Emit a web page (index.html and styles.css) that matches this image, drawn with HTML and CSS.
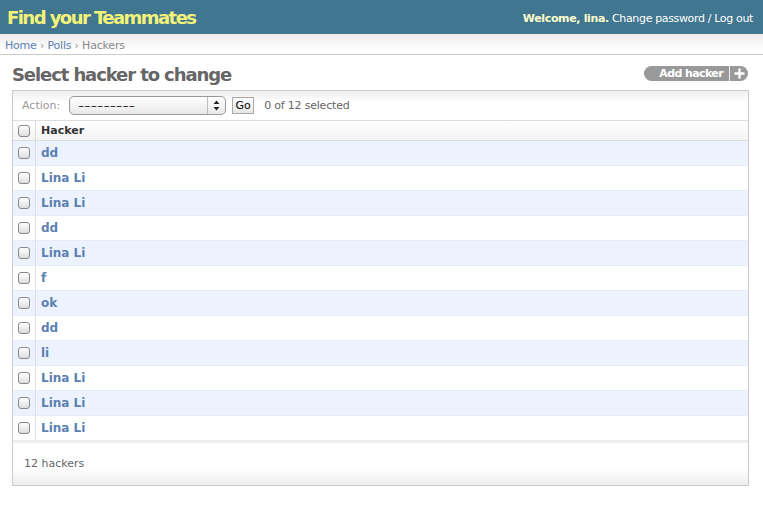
FILE: index.html
```html
<!DOCTYPE html>
<html>
<head>
<meta charset="utf-8">
<title>Select hacker to change</title>
<link rel="stylesheet" href="styles.css">
</head>
<body>
<div class="header">
  <div class="branding">Find your Teammates</div>
  <div class="user-tools"><span class="welcome">Welcome, lina.</span> <a href="#">Change password</a> / <a href="#">Log out</a></div>
</div>
<div class="breadcrumbs"><a href="#">Home</a> <span class="sep">›</span> <a href="#">Polls</a> <span class="sep">›</span> <span class="current">Hackers</span></div>
<div class="content">
  <div class="title-row">
    <h1>Select hacker to change</h1>
    <a class="addlink" href="#"><span class="addlabel">Add hacker</span><span class="addicon"><svg width="13" height="13" viewBox="0 0 13 13"><path d="M6.5 1.5v10M1.5 6.5h10" stroke="#fff" stroke-width="2.4"/></svg></span></a>
  </div>
  <div class="changelist">
    <div class="actions">
      <label class="action-label">Action:</label>
      <div class="select"><span class="select-text">---------</span><span class="select-arrows"><svg width="7" height="11" viewBox="0 0 7 11"><path d="M3.5 0.5L6.5 4H0.5Z M3.5 10.5L6.5 7H0.5Z" fill="#222"/></svg></span></div>
      <button class="go">Go</button>
      <span class="counter">0 of 12 selected</span>
    </div>
    <div class="table">
      <div class="row head"><div class="cb-cell"><input type="checkbox"></div><div class="name-cell">Hacker</div></div>
      <div class="row odd"><div class="cb-cell"><input type="checkbox"></div><div class="name-cell"><a href="#">dd</a></div></div>
      <div class="row"><div class="cb-cell"><input type="checkbox"></div><div class="name-cell"><a href="#">Lina Li</a></div></div>
      <div class="row odd"><div class="cb-cell"><input type="checkbox"></div><div class="name-cell"><a href="#">Lina Li</a></div></div>
      <div class="row"><div class="cb-cell"><input type="checkbox"></div><div class="name-cell"><a href="#">dd</a></div></div>
      <div class="row odd"><div class="cb-cell"><input type="checkbox"></div><div class="name-cell"><a href="#">Lina Li</a></div></div>
      <div class="row"><div class="cb-cell"><input type="checkbox"></div><div class="name-cell"><a href="#">f</a></div></div>
      <div class="row odd"><div class="cb-cell"><input type="checkbox"></div><div class="name-cell"><a href="#">ok</a></div></div>
      <div class="row"><div class="cb-cell"><input type="checkbox"></div><div class="name-cell"><a href="#">dd</a></div></div>
      <div class="row odd"><div class="cb-cell"><input type="checkbox"></div><div class="name-cell"><a href="#">li</a></div></div>
      <div class="row"><div class="cb-cell"><input type="checkbox"></div><div class="name-cell"><a href="#">Lina Li</a></div></div>
      <div class="row odd"><div class="cb-cell"><input type="checkbox"></div><div class="name-cell"><a href="#">Lina Li</a></div></div>
      <div class="row last"><div class="cb-cell"><input type="checkbox"></div><div class="name-cell"><a href="#">Lina Li</a></div></div>
    </div>
    <div class="paginator">12 hackers</div>
  </div>
</div>
</body>
</html>
```
FILE: styles.css
```css
* { box-sizing: border-box; }
body {
  margin: 0;
  font-family: "DejaVu Sans", "Liberation Sans", sans-serif;
  font-size: 12px;
  color: #333;
  background: #fff;
}
a { text-decoration: none; color: #5b80b2; }

.header {
  height: 34px;
  background: #417690;
  display: flex;
  justify-content: space-between;
  align-items: center;
  padding: 0 10px 0 7px;
}
.branding {
  color: #f4f379;
  font-size: 18px;
  font-weight: bold;
  letter-spacing: -1.55px;
}
.user-tools {
  font-size: 11px;
  color: #fff;
  padding-top: 2px;
  letter-spacing: -0.35px;
}
.user-tools .welcome { color: #ffc; font-weight: bold; }
.user-tools a { color: #fff; }

.breadcrumbs {
  height: 21px;
  padding: 5px 5px 0;
  font-size: 11px;
  color: #999;
  background: linear-gradient(#ececec, #fff 80%);
  border-bottom: 1px solid #ccc;
  letter-spacing: -0.2px;
}
.breadcrumbs .current { color: #888; }
.breadcrumbs .sep { color: #999; }

.content {
  padding: 9px 14px 0 12px;
}
.title-row {
  display: flex;
  justify-content: space-between;
  align-items: flex-start;
  height: 26px;
}
h1 {
  margin: 0;
  font-size: 18px;
  font-weight: bold;
  color: #666;
  line-height: 22px;
  letter-spacing: -1.1px;
}
.addlink {
  margin-top: 2px;
  margin-right: 1px;
  display: flex;
  align-items: center;
  height: 15px;
  border-radius: 8px;
  background: #999;
  color: #fff;
  font-size: 11px;
  font-weight: bold;
  overflow: hidden;
}
.addlabel {
  padding: 0 6px 0 15px;
  line-height: 15px;
  letter-spacing: -0.6px;
}
.addicon {
  display: flex;
  align-items: center;
  justify-content: center;
  height: 15px;
  width: 19px;
  border-left: 1px solid #eee;
}

.changelist {
  border: 1px solid #ccc;
}
.actions {
  height: 30px;
  display: flex;
  align-items: center;
  padding-left: 9px;
  font-size: 11px;
  color: #999;
  background: linear-gradient(#efefef, #fff 40%);
  border-bottom: 1px solid #ddd;
}
.action-label { margin-right: 9px; }
.select {
  width: 157px;
  height: 19px;
  border: 1px solid #999;
  border-radius: 5px;
  background: linear-gradient(#fff, #e8e8e8);
  display: flex;
  align-items: center;
  justify-content: space-between;
  color: #222;
  font-size: 11px;
}
.select-text {
  display: inline-block;
  margin-left: 8px;
  transform: scaleX(1.6);
  transform-origin: left center;
}
.select-arrows {
  display: flex;
  align-items: center;
  justify-content: center;
  width: 18px;
  height: 17px;
  border-left: 1px solid #bbb;
}
.go {
  margin-left: 6px;
  height: 17px;
  width: 22px;
  padding: 0;
  border: 1px solid #aaa;
  background: linear-gradient(#fff, #e6e6e6);
  font-family: inherit;
  font-size: 11px;
  color: #000;
}
.counter {
  margin-left: 10px;
  color: #666;
  letter-spacing: -0.2px;
}

.row {
  display: flex;
  height: 25px;
  border-bottom: 1px solid #e5ecf5;
  background: #fff;
}
.row.odd { background: #edf3fe; }
.row.head {
  height: 20px;
  background: linear-gradient(#fff, #f3f3f3);
  border-bottom: 1px solid #ddd;
  font-size: 11px;
  font-weight: bold;
  color: #333;
}
.row.last { border-bottom: 3px solid #eee; height: 27px; }
.cb-cell {
  width: 23px;
  border-right: 1px solid #ddd;
  display: flex;
  align-items: center;
  justify-content: center;
}
.name-cell {
  display: flex;
  align-items: center;
  padding-left: 5px;
}
.name-cell a {
  font-weight: bold;
  font-size: 12px;
  color: #5b80b2;
}
input[type="checkbox"] {
  -webkit-appearance: none;
  appearance: none;
  margin: 0 1px 0 0;
  width: 12px;
  height: 12px;
  border: 1px solid #888;
  border-radius: 3px;
  background: linear-gradient(#fff, #ddd);
}
.paginator {
  height: 42px;
  padding: 14px 0 0 11px;
  font-size: 11px;
  color: #666;
  background: linear-gradient(#fff 60%, #ededed);
}
```
